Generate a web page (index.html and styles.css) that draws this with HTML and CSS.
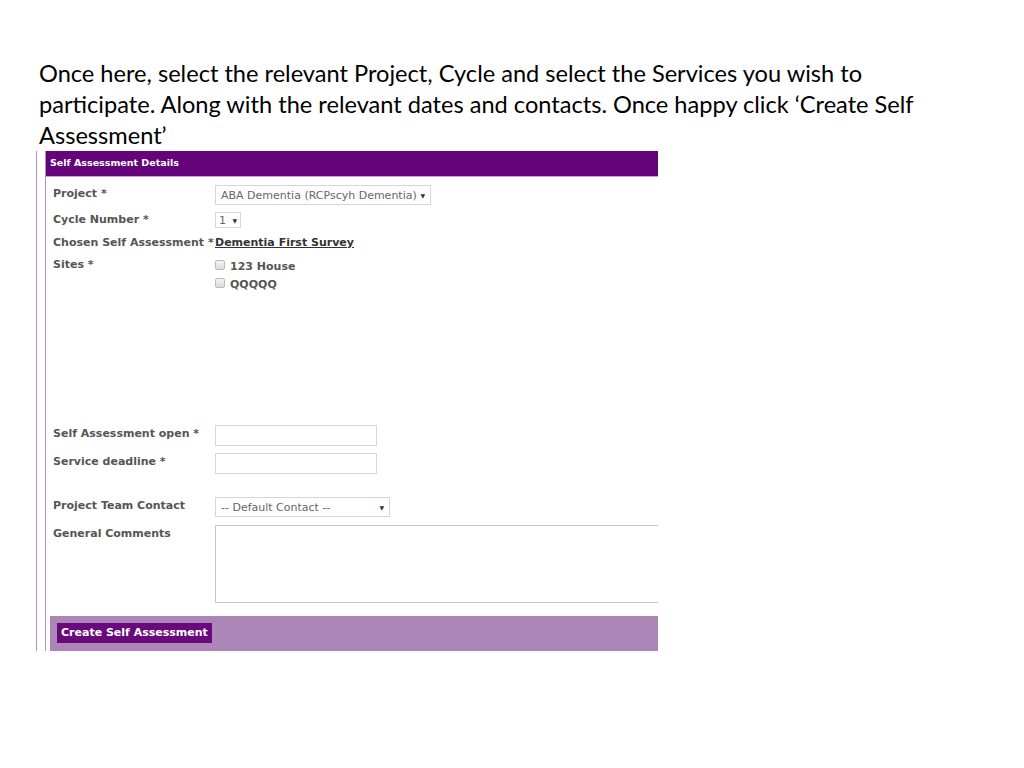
FILE: index.html
```html
<!DOCTYPE html>
<html>
<head>
<meta charset="utf-8">
<link rel="stylesheet" href="styles.css">
</head>
<body>
<p class="intro">Once here, select the relevant Project, Cycle and select the Services you wish to<br>participate. Along with the relevant dates and contacts. Once happy click ‘Create Self<br>Assessment’</p>
<div class="screen">
  <div class="panel">
    <div class="head">Self Assessment Details</div>
    <div class="body">
      <div class="row r1">
        <div class="label">Project *</div>
        <div class="select sel-project"><span>ABA Dementia (RCPscyh Dementia)</span><span class="arrow">▼</span></div>
      </div>
      <div class="row r2">
        <div class="label">Cycle Number *</div>
        <div class="select sel-cycle"><span>1</span><span class="arrow">▼</span></div>
      </div>
      <div class="row r3">
        <div class="label">Chosen Self Assessment *</div>
        <a class="link">Dementia First Survey</a>
      </div>
      <div class="row r4">
        <div class="label">Sites *</div>
        <div class="sites">
          <div class="site"><span class="check"></span>123 House</div>
          <div class="site"><span class="check"></span>QQQQQ</div>
        </div>
      </div>
      <div class="row r5">
        <div class="label">Self Assessment open *</div>
        <div class="input"></div>
      </div>
      <div class="row r6">
        <div class="label">Service deadline *</div>
        <div class="input"></div>
      </div>
      <div class="row r7">
        <div class="label">Project Team Contact</div>
        <div class="select sel-contact"><span>-- Default Contact --</span><span class="arrow">▼</span></div>
      </div>
      <div class="row r8">
        <div class="label">General Comments</div>
        <div class="textarea"></div>
      </div>
    </div>
    <div class="foot">
      <div class="button">Create Self Assessment</div>
    </div>
  </div>
</div>
</body>
</html>
```
FILE: styles.css
```css
html, body {
  margin: 0;
  padding: 0;
  background: #ffffff;
}
.intro {
  margin: 0;
  padding: 58px 0 0 39px;
  font-family: Lato, "Open Sans", sans-serif;
  font-size: 23.6px;
  line-height: 31px;
  color: #000;
  height: 93px;
}
.screen {
  margin-left: 36px;
  width: 613px;
  height: 500px;
  border-left: 1px solid #b98cc8;
  padding-left: 8px;
  overflow: hidden;
}
.panel {
  width: 700px;
  height: 500px;
  border-left: 1px solid #b68ec6;
  font-family: "DejaVu Sans", Verdana, sans-serif;
  font-size: 11px;
  font-weight: bold;
  color: #555;
}
.head {
  height: 25px;
  line-height: 24px;
  background: #65037a;
  border-bottom: 1px solid #c89fd6;
  color: #fff;
  padding-left: 4px;
  font-size: 9.5px;
}
.body {
  padding: 8px 0 0 7px;
}
.row {
  display: flex;
  align-items: flex-start;
}
.label {
  width: 162px;
  flex: none;
  line-height: 14px;
  padding-top: 2px;
  white-space: nowrap;
}
.r2 { margin-top: 7px; }
.r2 .label { padding-top: 1px; }
.r3 { margin-top: 8px; }
.r3 .label { padding-top: 0; }
.r4 { margin-top: 7px; }
.r4 .label { padding-top: 1px; }
.r5 { margin-top: 132px; }
.r6 { margin-top: 7px; }
.r7 { margin-top: 23px; }
.r8 { margin-top: 8px; }
.select {
  box-sizing: border-box;
  display: flex;
  align-items: center;
  justify-content: space-between;
  border: 1px solid #d6d6d6;
  background: #fff;
  color: #666;
  font-weight: normal;
  padding: 0 5px;
}
.arrow {
  font-size: 6px;
  color: #333;
}
.sel-project { width: 216px; height: 20px; }
.sel-cycle { width: 26px; height: 16px; padding: 0 3px; }
.sel-contact { width: 175px; height: 20px; }
.link {
  color: #333;
  text-decoration: underline;
  line-height: 14px;
  white-space: nowrap;
}
.sites {
  display: flex;
  flex-direction: column;
}
.site {
  height: 18px;
  display: flex;
  align-items: center;
  color: #555;
}
.check {
  box-sizing: border-box;
  width: 10px;
  height: 10px;
  border: 1px solid #bbb;
  border-radius: 2px;
  background: linear-gradient(#f4f4f4, #dcdcdc);
  margin-right: 5px;
  margin-top: -3px;
}
.input {
  box-sizing: border-box;
  width: 162px;
  height: 21px;
  border: 1px solid #d6d6d6;
  background: #fff;
}
.textarea {
  box-sizing: border-box;
  width: 500px;
  height: 78px;
  border: 1px solid #c8c8c8;
  background: #fff;
}
.foot {
  margin: 13px 0 0 4px;
  height: 35px;
  background: #ab86b6;
  padding: 7px 0 0 7px;
  box-sizing: border-box;
}
.button {
  display: inline-block;
  height: 20px;
  line-height: 20px;
  padding: 0 4px;
  background: #680a7c;
  color: #fff;
  font-size: 11px;
}
```
